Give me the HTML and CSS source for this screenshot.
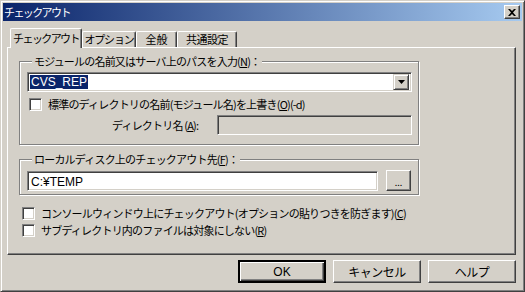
FILE: index.html
```html
<!DOCTYPE html>
<html lang="ja">
<head>
    <meta charset="UTF-8">
    <title>チェックアウト</title>
    <link rel="stylesheet" href="styles.css">
</head>
<body>
    <div class="window">
        <div class="titlebar">
            <span class="title">チェックアウト</span>
            <span class="close">
                <svg width="8" height="7" viewBox="0 0 8 7"><path d="M0 0h2l2 2 2-2h2L5 3.5 8 7H6L4 5 2 7H0l3-3.5z" fill="#000"/></svg>
            </span>
        </div>

        <div class="tabs">
            <div class="tab active">チェックアウト</div>
            <div class="tab tab-opt">オプション</div>
            <div class="tab tab-gen">全般</div>
            <div class="tab tab-com">共通設定</div>
        </div>

        <div class="panel">
            <fieldset class="group group-module">
                <legend>モジュールの名前又はサーバ上のパスを入力(<u>N</u>)：</legend>
                <div class="combo">
                    <span class="combo-text"><span class="selected">CVS_REP</span></span>
                    <span class="combo-btn">
                        <svg width="7" height="4" viewBox="0 0 7 4"><path d="M0 0h7L3.5 4z" fill="#000"/></svg>
                    </span>
                </div>
                <div class="check-row">
                    <span class="checkbox"></span>
                    <span>標準のディレクトリの名前(モジュール名)を上書き(<u>O</u>)(-d)</span>
                </div>
                <div class="dir-row">
                    <span class="dir-label">ディレクトリ名 (<u>A</u>):</span>
                    <span class="field disabled"></span>
                </div>
            </fieldset>

            <fieldset class="group group-local">
                <legend>ローカルディスク上のチェックアウト先(<u>F</u>)：</legend>
                <div class="path-row">
                    <span class="field path">C:¥TEMP</span>
                    <span class="button browse">...</span>
                </div>
            </fieldset>

            <div class="check-row outer first">
                <span class="checkbox"></span>
                <span>コンソールウィンドウ上にチェックアウト(オプションの貼りつきを防ぎます)(<u>C</u>)</span>
            </div>
            <div class="check-row outer">
                <span class="checkbox"></span>
                <span>サブディレクトリ内のファイルは対象にしない(<u>R</u>)</span>
            </div>
        </div>

        <div class="buttons">
            <span class="button default">OK</span>
            <span class="button">キャンセル</span>
            <span class="button">ヘルプ</span>
        </div>
    </div>
</body>
</html>
```

FILE: styles.css
```css
body {
    margin: 0;
    background: #d4d0c8;
    font-family: "Noto Sans CJK JP", "DejaVu Sans", sans-serif;
    font-size: 11px;
    letter-spacing: -0.8px;
    color: #000;
}
u {
    text-decoration: underline;
    text-underline-offset: 1px;
}
.window {
    width: 525px;
    height: 292px;
    box-sizing: border-box;
    background: #d4d0c8;
    border: 1px solid;
    border-color: #d4d0c8 #404040 #404040 #d4d0c8;
    box-shadow: inset 1px 1px 0 #fff, inset -1px -1px 0 #808080;
    padding: 2px;
    display: flex;
    flex-direction: column;
}
.titlebar {
    height: 18px;
    background: linear-gradient(to right, #0a246a, #a6caf0);
    display: flex;
    align-items: center;
    justify-content: space-between;
    padding: 0 2px 0 1px;
}
.title {
    color: #fff;
    font-size: 11px;
    letter-spacing: -1.6px;
    line-height: 18px;
}
.close {
    width: 16px;
    height: 14px;
    box-sizing: border-box;
    background: #d4d0c8;
    border: 1px solid;
    border-color: #fff #404040 #404040 #fff;
    box-shadow: inset -1px -1px 0 #808080;
    display: flex;
    align-items: center;
    justify-content: center;
}

/* tabs */
.tabs {
    display: flex;
    align-items: flex-end;
    margin: 7px 0 0 7px;
    height: 19px;
    position: relative;
    z-index: 2;
}
.tab {
    height: 16px;
    box-sizing: border-box;
    border: 1px solid;
    border-color: #fff #404040 transparent #fff;
    box-shadow: inset -1px 0 0 #808080;
    border-bottom: none;
    border-radius: 2px 2px 0 0;
    line-height: 15px;
    text-align: center;
    letter-spacing: -1.2px;
}
.tab.active {
    width: 72px;
    height: 20px;
    margin-bottom: -1px;
    background: #d4d0c8;
    padding-top: 1px;
    line-height: 16px;
    letter-spacing: -1.6px;
}
.tab-opt {
    width: 54px;
}
.tab-gen {
    width: 41px;
    letter-spacing: 0;
}
.tab-com {
    width: 60px;
    letter-spacing: -0.5px;
}
.panel {
    margin-left: 4px;
    width: 509px;
    height: 208px;
    box-sizing: border-box;
    border: 1px solid;
    border-color: #fff #404040 #404040 #fff;
    box-shadow: inset -1px -1px 0 #808080;
    padding: 7px 0 0 11px;
    display: flex;
    flex-direction: column;
}

/* group boxes */
.group {
    width: 400px;
    box-sizing: border-box;
    margin: 0;
    border: 1px solid #808080;
    box-shadow: inset 1px 1px 0 #fff, 1px 1px 0 #fff;
    padding: 0 6px 0 7px;
}
.group legend {
    padding: 0 2px;
    margin-left: 5px;
    line-height: 13px;
    background: #d4d0c8;
}
.group-module {
    height: 90px;
}
.group-local {
    height: 42px;
    margin-top: 8px;
}
.combo {
    margin-top: 4px;
    height: 20px;
    box-sizing: border-box;
    display: flex;
    align-items: center;
    background: #fff;
    border: 1px solid;
    border-color: #808080 #fff #fff #808080;
    box-shadow: inset 1px 1px 0 #404040, inset -1px -1px 0 #d4d0c8;
    padding: 2px;
}
.combo-text {
    flex: 1;
    line-height: 14px;
    font-family: "Liberation Sans", sans-serif;
    font-size: 12px;
    letter-spacing: 0;
}
.selected {
    background: #0a246a;
    color: #fff;
    padding: 0 1px;
}
.combo-btn {
    width: 16px;
    height: 16px;
    box-sizing: border-box;
    background: #d4d0c8;
    border: 1px solid;
    border-color: #d4d0c8 #404040 #404040 #d4d0c8;
    box-shadow: inset 1px 1px 0 #fff, inset -1px -1px 0 #808080;
    display: flex;
    align-items: center;
    justify-content: center;
}
.check-row {
    display: flex;
    align-items: center;
    gap: 6px;
    height: 14px;
    margin: 5px 0 0 2px;
    white-space: nowrap;
}
.checkbox {
    flex-shrink: 0;
    width: 13px;
    height: 13px;
    box-sizing: border-box;
    background: #fff;
    border: 1px solid;
    border-color: #808080 #fff #fff #808080;
    box-shadow: inset 1px 1px 0 #404040, inset -1px -1px 0 #d4d0c8;
}
.dir-row {
    display: flex;
    align-items: center;
    margin-top: 4px;
    padding-left: 85px;
}
.dir-label {
    flex-shrink: 0;
    width: 105px;
}
.field {
    height: 20px;
    box-sizing: border-box;
    background: #fff;
    border: 1px solid;
    border-color: #808080 #fff #fff #808080;
    box-shadow: inset 1px 1px 0 #404040, inset -1px -1px 0 #d4d0c8;
    padding: 2px 3px;
    line-height: 16px;
    font-family: "Liberation Sans", sans-serif;
    font-size: 12px;
    letter-spacing: 0;
}
.field.disabled {
    background: #d4d0c8;
    width: 195px;
    flex-shrink: 0;
}
.path-row {
    display: flex;
    align-items: center;
    gap: 8px;
    margin-top: 4px;
}
.field.path {
    width: 351px;
}
.button {
    box-sizing: border-box;
    background: #d4d0c8;
    border: 1px solid;
    border-color: #fff #404040 #404040 #fff;
    box-shadow: inset -1px -1px 0 #808080;
    display: flex;
    align-items: center;
    justify-content: center;
}
.browse {
    width: 25px;
    height: 21px;
    font-size: 9px;
    padding-top: 3px;
    letter-spacing: 0;
}
.check-row.outer {
    margin: 3px 0 0 3px;
}
.check-row.outer.first {
    margin-top: 11px;
}

/* bottom buttons */
.buttons {
    display: flex;
    justify-content: flex-end;
    gap: 7px;
    margin: 5px 6px 0 0;
}
.buttons .button {
    width: 88px;
    height: 23px;
    font-size: 12px;
    letter-spacing: -0.5px;
}
.buttons .default {
    border-width: 2px;
    border-color: #000;
    box-shadow: inset 1px 1px 0 #fff, inset -1px -1px 0 #404040, inset -2px -2px 0 #808080;
    font-family: "Liberation Sans", sans-serif;
    letter-spacing: 0;
}
```
